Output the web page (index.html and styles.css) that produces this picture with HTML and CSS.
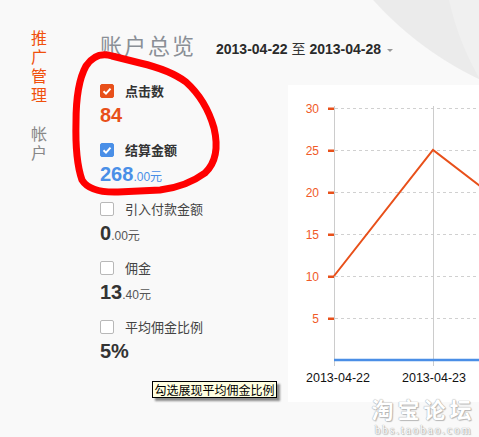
FILE: index.html
```html
<!DOCTYPE html>
<html lang="zh-CN">
<head>
<meta charset="utf-8">
<title>账户总览</title>
<link rel="stylesheet" href="styles.css">
</head>
<body>
<div class="page">
  <nav class="sidenav">
    <div class="nav-group active">推广管理</div>
    <div class="nav-group">帐户</div>
  </nav>
  <main class="main">
    <header class="header">
      <h1 class="title">账户总览</h1>
      <div class="daterange"><b>2013-04-22</b> 至 <b>2013-04-28</b><span class="caret"></span></div>
    </header>
    <section class="content">
      <ul class="metrics">
        <li class="metric">
          <div class="metric-label strong"><span class="cb cb-orange"><svg viewBox="0 0 14 14" width="14" height="14"><polyline points="3.5,7.2 6,9.6 10.5,4.6" fill="none" stroke="#fff" stroke-width="2"/></svg></span>点击数</div>
          <div class="metric-value orange"><span class="big">84</span></div>
        </li>
        <li class="metric">
          <div class="metric-label strong"><span class="cb cb-blue"><svg viewBox="0 0 14 14" width="14" height="14"><polyline points="3.5,7.2 6,9.6 10.5,4.6" fill="none" stroke="#fff" stroke-width="2"/></svg></span>结算金额</div>
          <div class="metric-value blue"><span class="big">268</span><span class="small">.00元</span></div>
        </li>
        <li class="metric">
          <div class="metric-label"><span class="cb"></span>引入付款金额</div>
          <div class="metric-value"><span class="big">0</span><span class="small">.00元</span></div>
        </li>
        <li class="metric">
          <div class="metric-label"><span class="cb"></span>佣金</div>
          <div class="metric-value"><span class="big">13</span><span class="small">.40元</span></div>
        </li>
        <li class="metric">
          <div class="metric-label"><span class="cb"></span>平均佣金比例</div>
          <div class="metric-value"><span class="big">5%</span></div>
        </li>
      </ul>
      <div class="chart">
        <svg class="chart-svg" width="240" height="317" viewBox="0 0 240 317">
          <g stroke="#d0d0d0" stroke-width="1" stroke-dasharray="3 3" fill="none">
            <line x1="47" y1="23.5" x2="240" y2="23.5"/>
            <line x1="47" y1="65.5" x2="240" y2="65.5"/>
            <line x1="47" y1="107.5" x2="240" y2="107.5"/>
            <line x1="47" y1="149.5" x2="240" y2="149.5"/>
            <line x1="47" y1="191.5" x2="240" y2="191.5"/>
            <line x1="47" y1="233.5" x2="240" y2="233.5"/>
          </g>
          <g stroke="#cccccc" stroke-width="1">
            <line x1="46.5" y1="21" x2="46.5" y2="281"/>
            <line x1="145.5" y1="21" x2="145.5" y2="281"/>
          </g>
          <g fill="#e8501a">
            <rect x="40" y="22.5" width="6" height="2.5"/>
            <rect x="40" y="64.5" width="6" height="2.5"/>
            <rect x="40" y="106.5" width="6" height="2.5"/>
            <rect x="40" y="148.5" width="6" height="2.5"/>
            <rect x="40" y="190.5" width="6" height="2.5"/>
            <rect x="40" y="232.5" width="6" height="2.5"/>
          </g>
          <g class="ylab" text-anchor="end">
            <text x="31" y="28">30</text>
            <text x="31" y="70">25</text>
            <text x="31" y="112">20</text>
            <text x="31" y="154">15</text>
            <text x="31" y="196">10</text>
            <text x="31" y="238">5</text>
          </g>
          <polyline points="46,191 145,65 244,141" fill="none" stroke="#e8501a" stroke-width="2"/>
          <line x1="46" y1="275" x2="240" y2="275" stroke="#4a8ee6" stroke-width="2.5"/>
          <g class="xlab" text-anchor="middle">
            <text x="50" y="297">2013-04-22</text>
            <text x="146" y="297">2013-04-23</text>
          </g>
        </svg>
      </div>
    </section>
  </main>
</div>
<svg class="scribble" width="479" height="437" viewBox="0 0 479 437">
  <path d="M86 66 Q96 51 112 56 L140 63 Q170 70 186 82 Q206 100 214 128 Q221 158 205 173 Q186 187 160 190 L118 192 Q90 193 82 180 Q75 160 76 122 Q76 84 86 66 Z" fill="none" stroke="#ff0000" stroke-width="7" stroke-linejoin="round"/>
</svg>
<div class="tooltip">勾选展现平均佣金比例</div>
<div class="watermark"><span class="wm-cn">淘宝论坛</span><span class="wm-en">bbs.taobao.com</span></div>
</body>
</html>
```

FILE: styles.css
```css
html, body {
  margin: 0;
  padding: 0;
  overflow: hidden;
}
body {
  width: 479px;
  height: 437px;
  font-family: "Liberation Sans", "Noto Sans CJK SC", sans-serif;
  color: #333;
  background-color: #f9f9f9;
  background-image:
    radial-gradient(circle 278px at 720px -60px, #f0f0f0 277px, rgba(240,240,240,0) 278px),
    radial-gradient(circle 341px at 626px -228px, #ebebeb 340px, rgba(235,235,235,0) 341px);
  background-repeat: no-repeat;
}
.page {
  display: flex;
  padding-top: 28px;
}
.sidenav {
  width: 16px;
  padding-left: 31px;
  margin-right: 53px;
  flex-shrink: 0;
}
.nav-group {
  width: 16px;
  font-family: "Noto Sans CJK SC", sans-serif;
  font-size: 16px;
  line-height: 19px;
  color: #888;
  word-break: break-all;
}
.nav-group.active {
  color: #f0500c;
  margin-bottom: 20px;
}
.main {
  flex: 1;
  min-width: 0;
}
.header {
  display: flex;
  align-items: baseline;
  margin-top: 2px;
  height: 28px;
}
.title {
  margin: 0;
  font-family: "Noto Sans CJK SC", sans-serif;
  font-weight: normal;
  font-size: 22px;
  letter-spacing: 2px;
  line-height: 28px;
  color: #8a8f96;
}
.daterange {
  margin-left: 20px;
  font-size: 14px;
  color: #333;
  white-space: nowrap;
}
.daterange b {
  font-weight: bold;
  color: #2a2a2a;
}
.caret {
  display: inline-block;
  margin-left: 6px;
  vertical-align: 2px;
  border-left: 3.5px solid transparent;
  border-right: 3.5px solid transparent;
  border-top: 3px solid #999;
}
.content {
  display: flex;
  margin-top: 26px;
}
.metrics {
  list-style: none;
  margin: 0;
  padding: 0;
  width: 188px;
  flex-shrink: 0;
}
.metric {
  margin-bottom: 16px;
}
.metric-label {
  display: flex;
  align-items: center;
  gap: 11px;
  height: 14px;
  font-family: "Noto Sans CJK SC", sans-serif;
  font-size: 13px;
  line-height: 14px;
  color: #444;
}
.metric-label.strong {
  font-weight: bold;
  color: #333;
}
.cb {
  display: flex;
  align-items: center;
  justify-content: center;
  width: 14px;
  height: 14px;
  box-sizing: border-box;
  border: 1px solid #b8b8b8;
  border-radius: 2px;
  background: #fff;
  flex-shrink: 0;
}
.cb svg {
  display: block;
  flex-shrink: 0;
}
.cb-orange {
  background: #e8501a;
  border-color: #e8501a;
}
.cb-blue {
  background: #4a8fe7;
  border-color: #4a8fe7;
}
.metric-value {
  margin-top: 5px;
  height: 24px;
  line-height: 24px;
  color: #333;
  white-space: nowrap;
}
.big {
  font-size: 20px;
  font-weight: bold;
}
.small {
  font-family: "Liberation Sans", "Noto Sans CJK SC", sans-serif;
  font-size: 12px;
  color: #555;
}
.metric-value.orange {
  color: #e8501a;
}
.metric-value.blue,
.metric-value.blue .small {
  color: #4a8fe7;
}
.chart {
  flex: 1;
  min-width: 0;
  height: 317px;
  margin-top: 1px;
  background: #fff;
  overflow: hidden;
}
.chart-svg {
  display: block;
}
.ylab text {
  font-family: "Liberation Sans", sans-serif;
  font-size: 12px;
  fill: #f05a28;
}
.xlab text {
  font-family: "Liberation Sans", sans-serif;
  font-size: 12.5px;
  fill: #111;
}
.scribble {
  position: absolute;
  left: 0;
  top: 0;
  pointer-events: none;
}
.tooltip {
  position: absolute;
  left: 152px;
  top: 381px;
  width: 123px;
  height: 15px;
  border: 1px solid #000;
  background: #ffffe1;
  box-shadow: 3px 3px 2px rgba(0,0,0,0.45);
  font-family: "Noto Sans CJK SC", sans-serif;
  font-size: 12px;
  line-height: 15px;
  text-align: center;
  color: #000;
  white-space: nowrap;
}
.watermark {
  position: absolute;
  left: 368px;
  top: 400px;
  width: 111px;
  display: flex;
  flex-direction: column;
  align-items: center;
  color: #fff;
  text-shadow: 0 0 1px #aaa, 0 0 1px #aaa, 1px 1px 1px #bbb;
}
.wm-cn {
  font-family: "Liberation Sans", "Noto Sans CJK SC", sans-serif;
  font-weight: bold;
  font-size: 22px;
  line-height: 22px;
  height: 22px;
  letter-spacing: 4px;
}
.wm-en {
  margin-top: 1.5px;
  font-family: "Liberation Serif", serif;
  font-size: 11.5px;
  line-height: 12px;
  height: 12px;
  letter-spacing: 1.8px;
}
```
